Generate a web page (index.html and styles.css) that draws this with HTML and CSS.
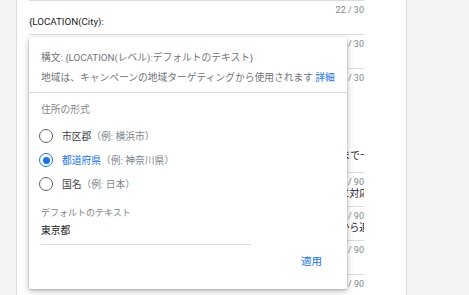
FILE: index.html
```html
<html>
<head>
    <title>広告文の編集</title>
    <meta charset="UTF-8">
    <link rel="stylesheet" href="styles.css">
</head>
<body>
    <div class="page">
        <div class="side"></div>
        <div class="card">
            <div class="fields">
                <div class="field">
                    <div class="count">22 / 30</div>
                    <div class="value">{LOCATION(City):</div>
                </div>
                <div class="field">
                    <div class="count">15 / 30</div>
                    <div class="value">東京の人気ショップ</div>
                </div>
                <div class="field tall">
                    <div class="count">18 / 30</div>
                    <div class="value">期間限定キャンペーン実施中。人気商品が最大半額になるセールは月末まで一部商品は対象外です</div>
                </div>
                <div class="field">
                    <div class="count">72 / 90</div>
                    <div class="value">全国どこでも送料無料でお届けします。お客様のご要望に迅速かつ丁寧に対応します</div>
                </div>
                <div class="field">
                    <div class="count">64 / 90</div>
                    <div class="value">公式オンラインストア限定の特別セールを開催中です。詳細は各ページから追加できます</div>
                </div>
                <div class="field">
                    <div class="count">12 / 90</div>
                    <div class="value">送料無料</div>
                </div>
                <div class="field">
                    <div class="count">8 / 90</div>
                    <div class="value"></div>
                </div>

                <!-- 地域挿入のポップアップ -->
                <div class="popup">
                    <div class="popup-info">
                        <div class="info-line">構文: {LOCATION(レベル):デフォルトのテキスト}</div>
                        <div class="info-line">地域は、キャンペーンの地域ターゲティングから使用されます <a class="link">詳細</a></div>
                    </div>
                    <div class="popup-body">
                        <div class="group-label">住所の形式</div>
                        <div class="radio-list">
                            <div class="radio-row">
                                <span class="radio"></span>
                                <span class="radio-text">市区郡</span>
                                <span class="radio-hint">（例: 横浜市）</span>
                            </div>
                            <div class="radio-row checked">
                                <span class="radio"></span>
                                <span class="radio-text">都道府県</span>
                                <span class="radio-hint">（例: 神奈川県）</span>
                            </div>
                            <div class="radio-row">
                                <span class="radio"></span>
                                <span class="radio-text">国名</span>
                                <span class="radio-hint">（例: 日本）</span>
                            </div>
                        </div>
                        <div class="text-field">
                            <div class="field-label">デフォルトのテキスト</div>
                            <div class="field-input">東京都</div>
                        </div>
                        <div class="actions">
                            <a class="apply-btn">適用</a>
                        </div>
                    </div>
                </div>
            </div>
        </div>
        <div class="side-right"></div>
    </div>
</body>
</html>
```

FILE: styles.css
```css
:root {
    --blue: #1a73e8;
    --line: #dadce0;
    --grey-bg: #f1f3f4;
    --text: #202124;
    --text-muted: #80868b;
    --text-secondary: #70757a;
}

body {
    margin: 0;
    font-family: Roboto, "Noto Sans CJK JP", sans-serif;
    color: var(--text);
    background: var(--grey-bg);
    overflow: hidden;
}

.page {
    display: flex;
    height: 295px;
}

.side {
    width: 16px;
    background: var(--grey-bg);
    border-right: 1px solid var(--line);
}

.card {
    width: 390px;
    background: white;
    border-right: 1px solid var(--line);
    padding: 0 42px 0 12px;
    box-sizing: border-box;
}

.side-right {
    flex: 1;
    background: var(--grey-bg);
}

.fields {
    position: relative;
}

.field {
    border-top: 1px solid var(--line);
    height: 33px;
}

.field.tall {
    height: 103px;
}

.count {
    text-align: right;
    font-size: 9px;
    line-height: 11px;
    margin-top: 4px;
    color: var(--text-muted);
}

.value {
    font-size: 9.75px;
    line-height: 12px;
    white-space: nowrap;
    overflow: hidden;
}

.field.tall .value {
    margin-top: 66px;
}

/* ポップアップ */
.popup {
    position: absolute;
    left: 0;
    top: 37px;
    width: 318px;
    background: white;
    box-shadow: 0 1px 3px rgba(0, 0, 0, 0.25), 0 3px 8px rgba(0, 0, 0, 0.18);
    border-radius: 2px;
}

.popup-info {
    padding: 11px 12px 4px;
    border-bottom: 1px solid var(--line);
}

.info-line {
    font-size: 9.75px;
    line-height: 20px;
    color: var(--text-secondary);
    white-space: nowrap;
}

.link {
    color: var(--blue);
}

.popup-body {
    padding: 9px 12px 19px;
}

.group-label {
    font-size: 9.75px;
    line-height: 16px;
    color: var(--text-muted);
}

.radio-list {
    margin-top: 6px;
}

.radio-row {
    display: flex;
    align-items: center;
    height: 24px;
    margin-left: -2px;
    font-size: 9.75px;
}

.radio {
    width: 14px;
    height: 14px;
    border: 1.5px solid #5f6368;
    border-radius: 50%;
    box-sizing: border-box;
    margin-right: 9px;
    display: grid;
    place-items: center;
}

.radio-text {
    color: #3c4043;
}

.radio-hint {
    color: var(--text-muted);
}

.radio-row.checked .radio {
    border-color: var(--blue);
}

.radio-row.checked .radio::after {
    content: "";
    width: 7px;
    height: 7px;
    border-radius: 50%;
    background: var(--blue);
}

.radio-row.checked .radio-text {
    color: var(--blue);
}

.text-field {
    margin-top: 10px;
    width: 210px;
}

.field-label {
    font-size: 9px;
    line-height: 14px;
    color: var(--text-muted);
}

.field-input {
    margin-top: 3px;
    font-size: 9.75px;
    line-height: 16px;
    padding-bottom: 5px;
    border-bottom: 1px solid var(--line);
}

.actions {
    margin-top: 9px;
    display: flex;
    justify-content: flex-end;
    padding-right: 13px;
}

.apply-btn {
    font-size: 10.5px;
    line-height: 16px;
    color: var(--blue);
}
```
